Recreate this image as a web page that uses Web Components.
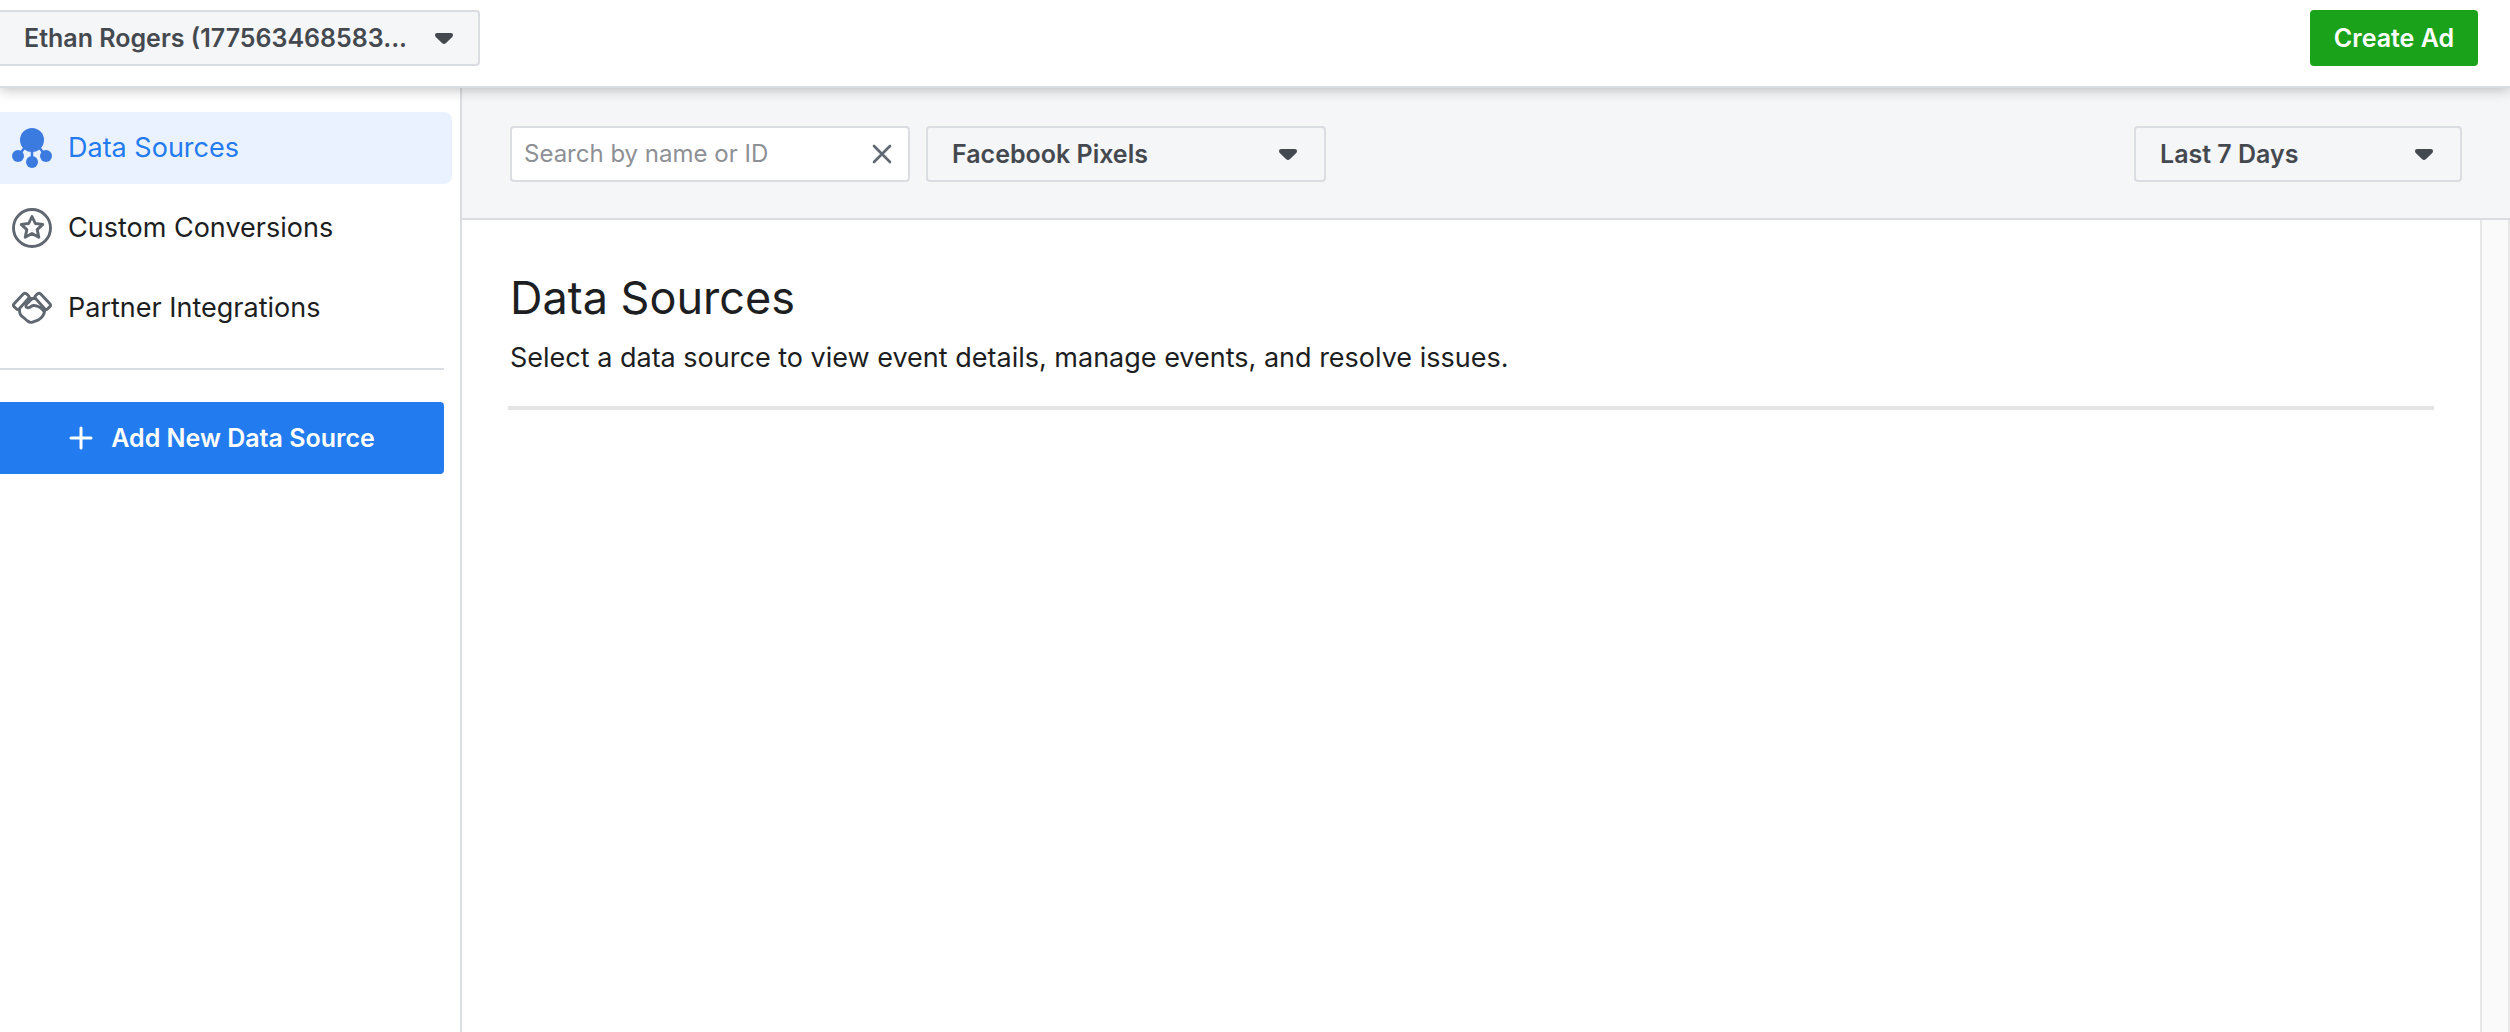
<!DOCTYPE html>
<html lang="en">
<head>
<meta charset="utf-8">
<title>Data Sources</title>
<style>
  html, body { margin: 0; height: 100%; }
  body { font-family: Inter, "Liberation Sans", sans-serif; color: #1c1e21; background: #fff; }
</style>
</head>
<body>
<events-app></events-app>
<script>
const define = (name, html, init) => {
  const template = document.createElement('template');
  template.innerHTML = '<style>*{box-sizing:border-box}:host{box-sizing:border-box}</style>' + html;
  customElements.define(name, class extends HTMLElement {
    connectedCallback() {
      if (this.shadowRoot) return;
      this.attachShadow({ mode: 'open' }).append(template.content.cloneNode(true));
      if (init) init(this, this.shadowRoot);
    }
  });
};

define('drop-down', `
  <style>
    :host { display: grid; width: 400px; height: 56px; }
    select, svg { grid-area: 1 / 1; }
    select { appearance: none; width: 100%; height: 100%; margin: 0; padding: 0 60px 0 24px;
      border: 2px solid #dadde1; border-radius: 4px; background: #f5f6f7;
      color: #444950; font: 600 25px/32px Inter, "Liberation Sans", sans-serif; }
    svg { width: 18px; height: 11px; margin-right: 29px; justify-self: end; align-self: center; pointer-events: none; }
    :host([flush]) select { border-left: 0; border-radius: 0 4px 4px 0; }
    :host([flush]) svg { margin-right: 27px; }
  </style>
  <select><option></option></select>
  <svg viewBox="0 0 18 11"><path d="M2 0h14q2 0 2 2 0 1.200-1 2.200L11 10q-2 2-4 0L1 4.200Q0 3.200 0 2 0 0 2 0z" fill="#444950"/></svg>
`, (el, root) => {
  root.querySelector('option').textContent = el.getAttribute('value');
  root.querySelector('select').setAttribute('aria-label', el.getAttribute('label'));
});

define('action-button', `
  <style>
    :host { display: block; }
    button { display: flex; align-items: center; justify-content: center; gap: 18px; width: 100%; height: 100%;
      margin: 0; padding: 0; border: 0; border-radius: var(--corners, 4px); background: var(--fill); color: #fff;
      font: 600 25px/32px Inter, "Liberation Sans", sans-serif; }
  </style>
  <button type="button"><slot name="icon"></slot><slot></slot></button>
`);

define('search-box', `
  <style>
    :host { display: flex; align-items: center; width: 400px; height: 56px; background: #fff;
      border: 2px solid #dadde1; border-radius: 4px; padding: 0 12px; }
    input { flex: 1; min-width: 0; border: 0; padding: 0; margin: 0; outline: 0; background: none;
      font: 400 24px/32px Inter, "Liberation Sans", sans-serif; color: #1c1e21; }
    input::placeholder { color: #8d9095; opacity: 1; }
    button { display: flex; padding: 4px; margin: 0; border: 0; background: none; }
  </style>
  <input type="text" aria-label="Search by name or ID" placeholder="Search by name or ID">
  <button type="button" aria-label="Clear search">
    <svg width="20" height="20" viewBox="0 0 20 20"><path d="M2 2l16 16M18 2L2 18" stroke="#606770" stroke-width="2.600" stroke-linecap="round"/></svg>
  </button>
`);

define('nav-item', `
  <style>
    :host { display: block; }
    a { display: flex; align-items: center; gap: 16px; height: 72px; padding-left: 12px; border-radius: 0 8px 8px 0;
      color: #1c1e21; text-decoration: none; font-size: 27px; line-height: 36px; white-space: nowrap; }
    :host([selected]) a { background: #ebf2ff; color: #227bef; }
  </style>
  <a href="#"><slot name="icon"></slot><slot></slot></a>
`);

define('top-bar', `
  <style>
    :host { display: flex; justify-content: space-between; align-items: flex-start; height: 88px; padding: 10px 32px 0 0;
      border-bottom: 2px solid #dadde1; background: #fff; box-shadow: 0 2px 12px rgba(0,0,0,.24); position: relative; z-index: 1; }
    drop-down { width: 480px; }
    action-button { width: 168px; height: 56px; --fill: #1aa31a; }
  </style>
  <drop-down flush label="Ad account" value="Ethan Rogers (177563468583..."></drop-down>
  <action-button>Create Ad</action-button>
`);

define('side-nav', `
  <style>
    :host { display: block; width: 462px; border-right: 2px solid #dadde1; padding: 24px 8px 0 0; }
    nav { display: flex; flex-direction: column; gap: 8px; }
    svg { display: block; fill: none; }
    hr { margin: 24px 8px 32px 0; border: 0; height: 2px; background: #dadde1; }
    action-button { height: 72px; margin-right: 8px; --fill: #227bef; --corners: 0 4px 4px 0; }
  </style>
  <nav>
    <nav-item selected>
      <svg slot="icon" width="40" height="40" viewBox="0 0 40 40">
        <path d="M20 20v14M14 18L6 28M26 18l8 10" stroke="#3b7be0" stroke-width="2.500"/>
        <g fill="#3b7be0"><circle cx="20" cy="12" r="12"/><circle cx="6" cy="28" r="6"/><circle cx="34" cy="28" r="6"/><circle cx="20" cy="34" r="6"/></g>
      </svg>Data Sources</nav-item>
    <nav-item>
      <svg slot="icon" width="40" height="40" viewBox="0 0 40 40" stroke="#606770" stroke-width="2.900" stroke-linejoin="round">
        <circle cx="20" cy="20" r="18.500"/>
        <path d="M20 8.500l3.300 7 7.500.9-5.600 5.200 1.600 7.600-6.800-3.700-6.800 3.700 1.600-7.600-5.600-5.200 7.500-.9z"/>
      </svg>Custom Conversions</nav-item>
    <nav-item>
      <svg slot="icon" width="40" height="40" viewBox="0 0 40 40" stroke="#606770" stroke-width="2.900" stroke-linejoin="round" stroke-linecap="round">
        <path d="M11.500 5.800q1.500-1.200 3 0l2 2q1.300 1.300 0 2.600L7.300 20.800q-1.500 1.600-3 0l-2.200-2.200q-1.400-1.400 0-2.800z"/>
        <path d="M28.500 5.800q-1.500-1.200-3 0l-2 2q-1.300 1.300 0 2.600L32.700 20.800q1.500 1.600 3 0l2.200-2.200q1.400-1.400 0-2.800z"/>
        <path d="M17 10.500h6M7.500 21.500q-.4 5.500 4 8l4 3.500q2.300 1.800 5 1.200l5.500-2q6-3.200 6.800-10"/>
        <path d="M20 10.800l-5.800 5.700q-1.200 2.600 1.500 3.200 2 .2 3.300-1.200 2-1.600 4.500-.8 5 .6 8.500 5.800"/>
      </svg>Partner Integrations</nav-item>
  </nav>
  <hr>
  <action-button>
    <svg slot="icon" width="24" height="24" viewBox="0 0 24 24"><path d="M12 2v20M2 12h20" stroke="#fff" stroke-width="3" stroke-linecap="round"/></svg>
    Add New Data Source</action-button>
`);

define('filter-bar', `
  <style>
    :host { display: flex; align-items: flex-start; gap: 16px; padding: 38px 48px 36px;
      background: #f5f6f7; border-bottom: 2px solid #dadde1; }
    .range { width: 328px; margin-left: auto; }
  </style>
  <search-box></search-box>
  <drop-down label="Source type" value="Facebook Pixels"></drop-down>
  <drop-down class="range" label="Date range" value="Last 7 Days"></drop-down>
`);

define('source-panel', `
  <style>
    :host { display: flex; flex: 1; min-height: 0; }
    section { flex: 1; min-width: 0; padding: 48px 46px 0; }
    h1 { margin: 0; padding: 0 2px; font-size: 45px; line-height: 60px; font-weight: 400; }
    p { margin: 12px 0 0; padding: 0 2px; font-size: 27px; line-height: 36px; }
    hr { margin: 30px 0 0; height: 4px; border: 0; background: #e4e4e4; }
    .track { width: 30px; background: #fafafa; border: solid #e7e7e7; border-width: 0 2px; }
  </style>
  <section>
    <h1>Data Sources</h1>
    <p>Select a data source to view event details, manage events, and resolve issues.</p>
    <hr>
  </section>
  <div class="track"></div>
`);

define('events-app', `
  <style>
    :host { display: flex; flex-direction: column; min-height: 100vh; }
    .body { display: flex; flex: 1; }
    main { display: flex; flex-direction: column; flex: 1; min-width: 0; }
    side-nav { flex: none; }
  </style>
  <top-bar></top-bar>
  <div class="body">
    <side-nav></side-nav>
    <main><filter-bar></filter-bar><source-panel></source-panel></main>
  </div>
`);
</script>
</body>
</html>
